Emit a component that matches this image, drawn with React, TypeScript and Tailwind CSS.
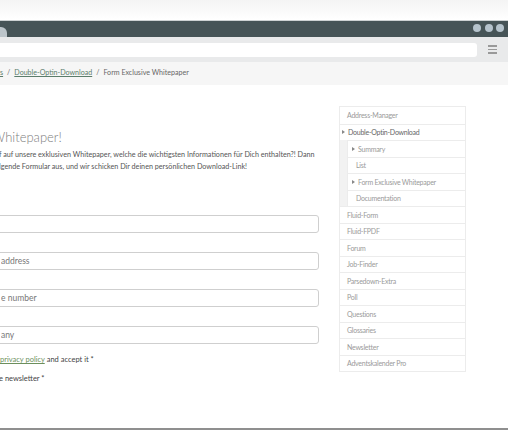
import React from 'react';

const navItems: { label: string; level: number; arrow?: boolean; dark?: boolean }[] = [
    { label: 'Address-Manager', level: 0 },
    { label: 'Double-Optin-Download', level: 0, arrow: true, dark: true },
    { label: 'Summary', level: 1, arrow: true },
    { label: 'List', level: 1 },
    { label: 'Form Exclusive Whitepaper', level: 1, arrow: true },
    { label: 'Documentation', level: 1 },
    { label: 'Fluid-Form', level: 0 },
    { label: 'Fluid-FPDF', level: 0 },
    { label: 'Forum', level: 0 },
    { label: 'Job-Finder', level: 0 },
    { label: 'Parsedown-Extra', level: 0 },
    { label: 'Poll', level: 0 },
    { label: 'Questions', level: 0 },
    { label: 'Glossaries', level: 0 },
    { label: 'Newsletter', level: 0 },
    { label: 'Adventskalender Pro', level: 0 },
];

const Arrow = () => (
    <span className="inline-block w-0 h-0 border-y-[2.5px] border-y-transparent border-l-[3px] border-l-[#888] mr-[3px] align-middle"></span>
);

const Sidebar = () => (
    <nav className="w-[127px] border border-[#ececec] text-[7px] tracking-[-0.25px] text-[#9a9a9a]">
        {navItems.map((item, i) => (
            <div key={item.label} className={item.level === 1 ? 'flex bg-[#f2f2f2]' : 'flex'}>
                {item.level === 1 && <div className="w-[7px] shrink-0"></div>}
                <div
                    className={
                        'flex-1 h-[16.5px] flex items-center bg-white ' +
                        (i > 0 ? 'border-t border-[#ececec] ' : '') +
                        (item.level === 1 ? 'border-l ' : '') +
                        (item.arrow ? (item.level === 1 ? 'pl-[4px]' : 'pl-[2px]') : item.level === 1 ? 'pl-[8px]' : 'pl-[7px]') +
                        (item.dark ? ' text-[#666]' : '')
                    }
                >
                    {item.arrow && <Arrow />}
                    <span>{item.label}</span>
                </div>
            </div>
        ))}
    </nav>
);

const Field = ({ placeholder }: { placeholder: string }) => (
    <input
        readOnly
        placeholder={placeholder}
        className="block -ml-[10px] w-[329px] h-[18px] border border-[#cfcfcf] rounded-[3px] pl-[10px] text-[8.5px] bg-white placeholder:text-[#777] outline-none"
    />
);

export default function App() {
    return (
        <div className="w-[508px] h-[430px] overflow-hidden bg-white font-[Lato,'Liberation_Sans',sans-serif] flex flex-col">
            {/* ── Browser chrome ── */}
            <div className="h-[20px] bg-gradient-to-b from-[#f4f4f4] to-white shrink-0"></div>
            <div className="h-[17px] bg-[#465457] border-t border-[#cdd2d3] flex items-start shrink-0">
                <div className="w-[7px] h-[10px] mt-[6px] bg-[#bcc5ca] rounded-tr-[6px]"></div>
                <div className="ml-auto mt-[3px] pr-[4px] flex gap-[3.5px]">
                    <span className="w-[8px] h-[8px] rounded-full bg-[#b5c3cc]"></span>
                    <span className="w-[8px] h-[8px] rounded-full bg-[#b5c3cc]"></span>
                    <span className="w-[8px] h-[8px] rounded-full bg-[#b5c3cc]"></span>
                </div>
            </div>
            <div className="h-[25px] bg-[#e9eaeb] flex items-center shrink-0">
                <div className="w-[477px] h-[14px] bg-white rounded-r-[3px]"></div>
                <div className="ml-[11px] w-[9px] flex flex-col gap-[2px]">
                    <span className="h-[1.5px] bg-[#999]"></span>
                    <span className="h-[1.5px] bg-[#999]"></span>
                    <span className="h-[1.5px] bg-[#999]"></span>
                </div>
            </div>

            {/* ── Breadcrumb ── */}
            <div className="h-[23px] bg-[#f6f6f6] flex items-center text-[7.1px] text-[#666] whitespace-nowrap shrink-0">
                <span className="underline text-[#5b7d6b]">s</span>
                <span className="mx-[4px]">/</span>
                <span className="underline text-[#5b7d6b]">Double-Optin-Download</span>
                <span className="mx-[4px]">/</span>
                <span>Form Exclusive Whitepaper</span>
            </div>

            {/* ── Content ── */}
            <div className="flex-1 flex">
                <div className="w-[320px] shrink-0 overflow-hidden">
                    <h1 className="mt-[42px] -ml-[8px] text-[13px] leading-[20px] font-light text-[#808080] whitespace-nowrap">Whitepaper!</h1>
                    <p className="mt-[2px] text-[7.2px] leading-[12px] text-[#555] whitespace-nowrap -ml-[1px]">
                        f auf unsere exklusiven Whitepaper, welche die wichtigsten Informationen für Dich enthalten?! Dann
                        <br />
                        lgende Formular aus, und wir schicken Dir deinen persönlichen Download-Link!
                    </p>
                    <div className="mt-[42px] flex flex-col gap-[19px]">
                        <Field placeholder="" />
                        <Field placeholder="address" />
                        <Field placeholder="e number" />
                        <Field placeholder="any" />
                    </div>
                    <p className="mt-[10px] text-[7.5px] leading-[12px] text-[#444] whitespace-nowrap">
                        <span className="underline text-[#6c8f5c]">privacy policy</span> and accept it *
                    </p>
                    <p className="mt-[7px] text-[7.5px] leading-[12px] text-[#444] whitespace-nowrap -ml-[1px]">e newsletter *</p>
                </div>
                <div className="ml-[19px] pt-[21px]">
                    <Sidebar />
                </div>
            </div>
            <div className="h-[2px] bg-[#8f8f8f] shrink-0"></div>
        </div>
    );
}
